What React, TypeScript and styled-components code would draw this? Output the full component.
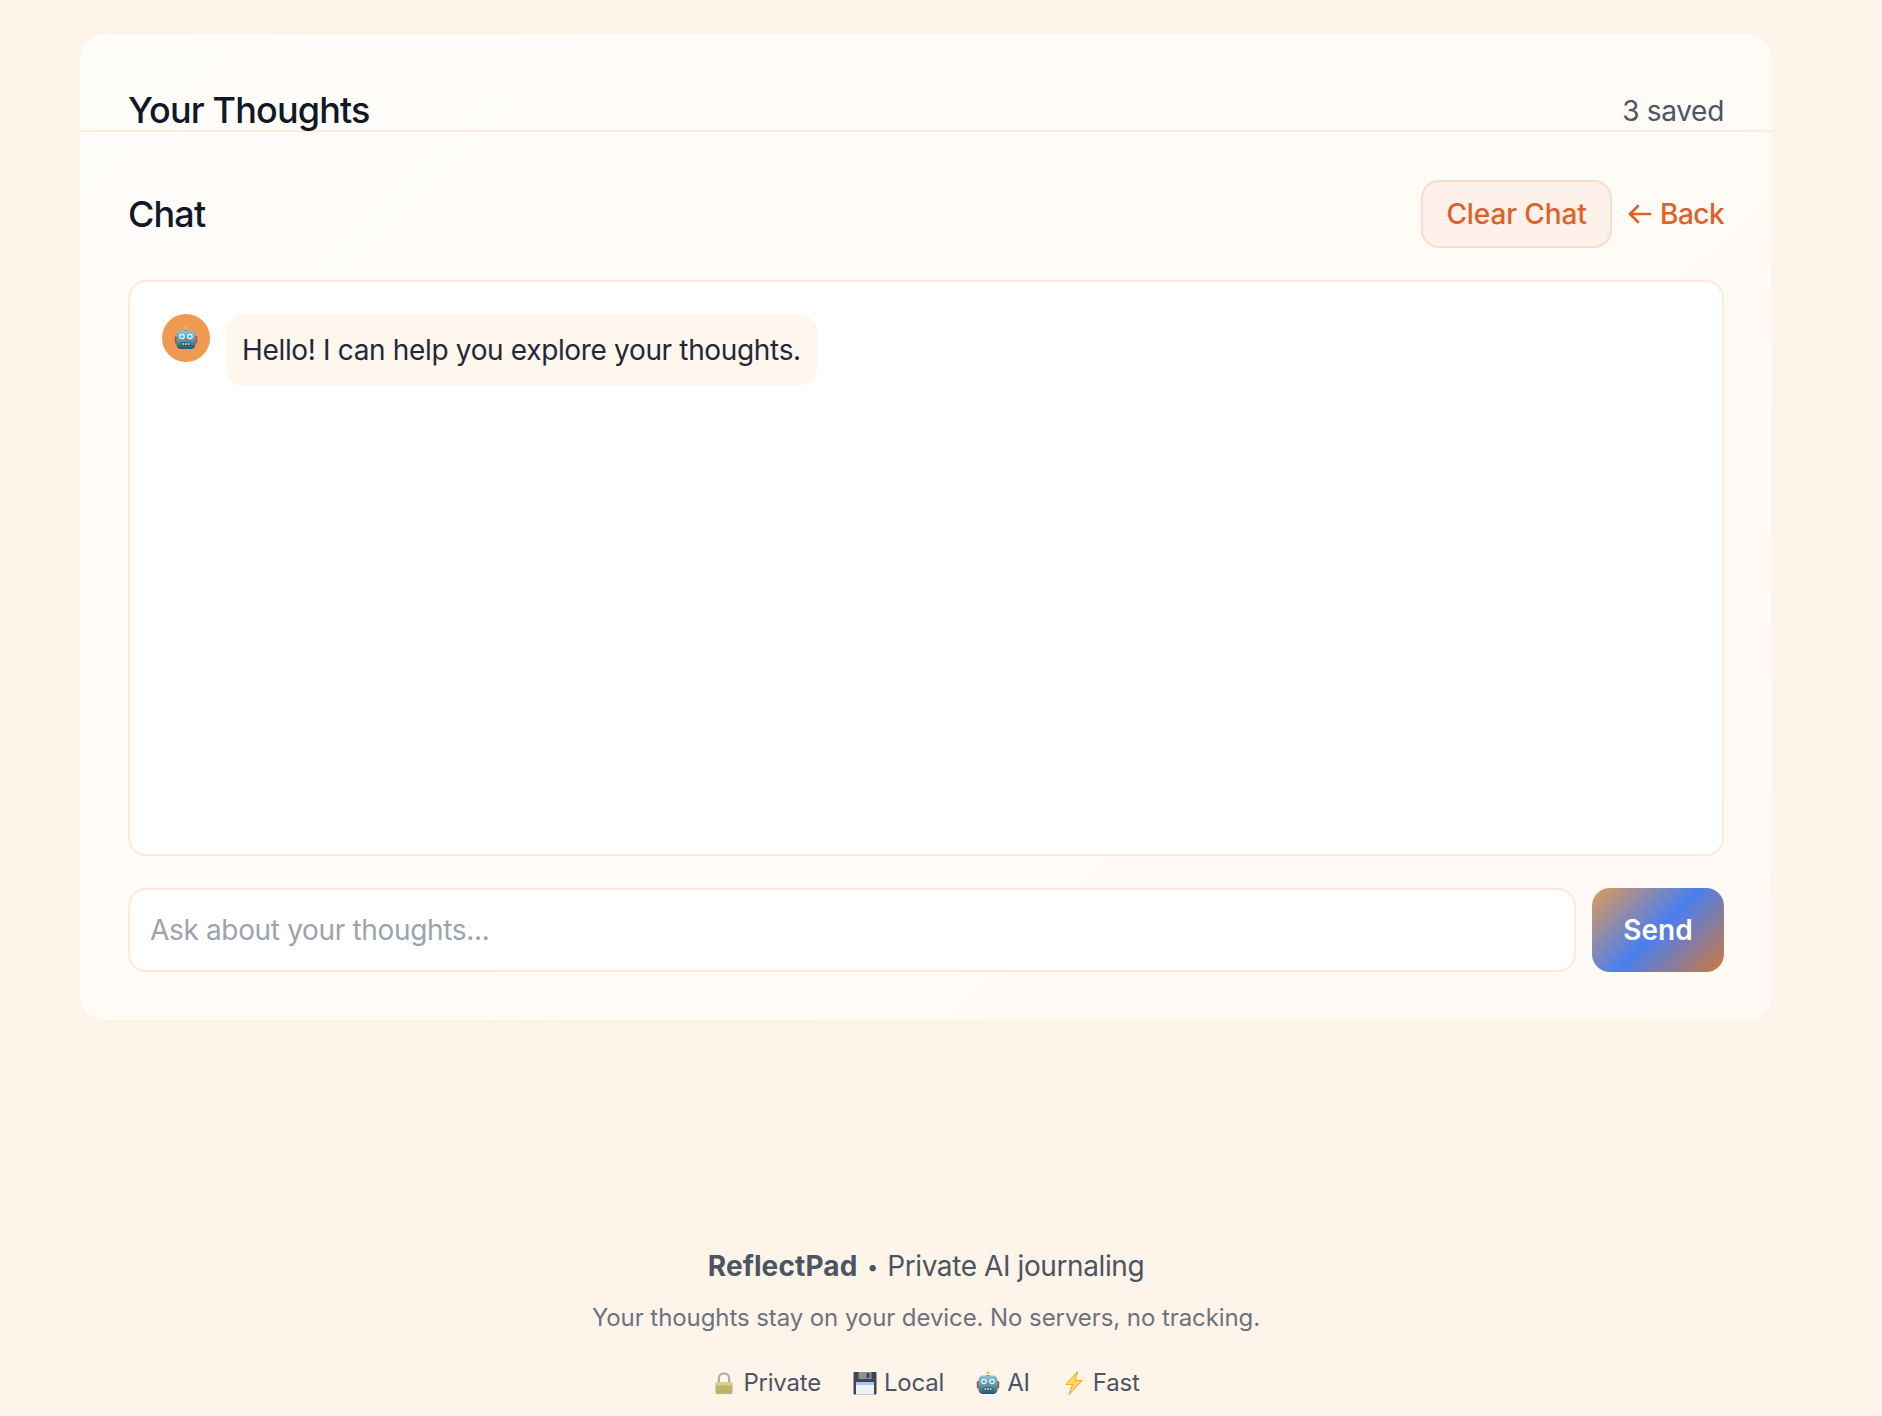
import styled, { createGlobalStyle } from 'styled-components';

const GlobalStyle = createGlobalStyle`
  html, body {
    margin: 0;
    padding: 0;
    background: #fff4ea;
  }
  body {
    font-family: Inter, "Noto Sans", sans-serif;
    color: #111827;
  }
`;

const Page = styled.div`
  width: 1852px;
  height: 1416px;
  overflow: hidden;
  padding: 34px 80px 0;
  box-sizing: border-box;
  display: flex;
  flex-direction: column;
`;

const Card = styled.main`
  background: linear-gradient(135deg, #fffdf9, #fff9f5);
  border-radius: 24px;
  height: 986px;
  box-sizing: border-box;
  display: flex;
  flex-direction: column;
  box-shadow: 0 0 0 1px #fff0e4;
`;

const Header = styled.header`
  height: 98px;
  padding: 0 48px;
  box-sizing: border-box;
  display: flex;
  justify-content: space-between;
  align-items: flex-end;
  border-bottom: 2px solid #ffeadb;
`;

const Title = styled.h1`
  margin: 0;
  font-size: 36px;
  line-height: 48px;
  font-weight: 500;
  letter-spacing: -0.85px;
  height: 44px;
  color: #111827;
`;

const SavedCount = styled.span`
  font-size: 28px;
  height: 44px;
  line-height: 50px;
  letter-spacing: -0.3px;
  color: #4b5563;
`;

const Body = styled.section`
  flex: 1;
  padding: 48px;
  display: flex;
  flex-direction: column;
  min-height: 0;
`;

const ChatBar = styled.div`
  display: flex;
  justify-content: space-between;
  align-items: center;
  height: 68px;
  margin-bottom: 32px;
`;

const ChatTitle = styled.h2`
  margin: 0;
  font-size: 36px;
  font-weight: 500;
  letter-spacing: -0.85px;
  color: #111827;
`;

const Actions = styled.div`
  display: flex;
  align-items: center;
  gap: 16px;
`;

const ClearButton = styled.button`
  height: 68px;
  width: 191px;
  padding: 0;
  border: 2px solid #fbdcc5;
  border-radius: 18px;
  background: #fdf1e9;
  color: #dc6229;
  font: 500 28px Inter, sans-serif;
  letter-spacing: -0.1px;
`;

const BackLink = styled.a`
  display: flex;
  align-items: center;
  gap: 8px;
  color: #dc6229;
  font-size: 28px;
  font-weight: 500;
  letter-spacing: -0.55px;
`;

const Messages = styled.div`
  flex: 1;
  background: #fff;
  border: 2px solid #ffe9dc;
  border-radius: 18px;
  padding: 32px;
`;

const Message = styled.div`
  display: flex;
  align-items: flex-start;
  gap: 16px;
`;

const Avatar = styled.div`
  width: 48px;
  height: 48px;
  border-radius: 50%;
  background: #ef9a50;
  display: flex;
  align-items: center;
  justify-content: center;
`;

const Bubble = styled.div`
  background: #fff6ed;
  border-radius: 18px;
  padding: 16px;
  font-size: 28px;
  line-height: 40px;
  letter-spacing: -0.34px;
  color: #1f2937;
`;

const InputRow = styled.form`
  display: flex;
  gap: 16px;
  margin-top: 32px;
  height: 84px;
`;

const TextInput = styled.input`
  flex: 1;
  border: 2px solid #ffe9dc;
  border-radius: 18px;
  background: #fff;
  padding: 0 20px;
  font: 400 28px Inter, sans-serif;
  letter-spacing: -0.34px;
  outline: none;

  &::placeholder {
    color: #9ca3af;
  }
`;

const SendButton = styled.button`
  width: 132px;
  border: 0;
  border-radius: 18px;
  color: #fff;
  font: 600 28px Inter, sans-serif;
  background: linear-gradient(135deg, #e09a58 0%, #4a7fef 50%, #d2773a 100%);
`;

const Footer = styled.footer`
  margin-top: 226px;
  text-align: center;
`;

const Tagline = styled.p`
  margin: 0;
  font-size: 28px;
  line-height: 40px;
  letter-spacing: -0.4px;
  color: #4b5563;
`;

const Brand = styled.strong`
  font-weight: 700;
  letter-spacing: 0.1px;
`;

const Dot = styled.span`
  font-size: 20px;
  margin: 0 2px;
  vertical-align: 2px;
`;

const Note = styled.p`
  margin: 13px 0 0;
  font-size: 24px;
  line-height: 36px;
  letter-spacing: -0.08px;
  color: #6b7280;
`;

const Badges = styled.div`
  display: flex;
  justify-content: center;
  gap: 29px;
  margin-top: 29px;
  padding-right: 3px;
  font-size: 24px;
  line-height: 36px;
  letter-spacing: -0.2px;
  color: #4b5563;
`;

const Badge = styled.span`
  display: flex;
  align-items: center;
  gap: 4px;
`;

const IconBox = styled.span`
  width: 30px;
  display: flex;
  justify-content: center;
`;

const RobotIcon = ({ size = 24 }: { size?: number }): JSX.Element => (
  <svg width={size} height={size} viewBox="0 0 24 24">
    <defs>
      <linearGradient id="robot-head" x1="0" y1="0" x2="0" y2="1">
        <stop offset="0" stopColor="#8fc4d2" />
        <stop offset="0.55" stopColor="#5a97aa" />
        <stop offset="1" stopColor="#23586e" />
      </linearGradient>
    </defs>
    <circle cx="12" cy="1.8" r="1.5" fill="#f4b942" />
    <path d="M8.5 5.5q3.5-3.2 7 0z" fill="#6d55a0" />
    <rect x="0.8" y="10" width="3" height="7.5" rx="1.2" fill="#b5503c" />
    <rect x="20.2" y="10" width="3" height="7.5" rx="1.2" fill="#b5503c" />
    <rect x="2.5" y="4.5" width="19" height="18.5" rx="4.5" fill="url(#robot-head)" />
    <circle cx="8" cy="10.5" r="2.8" fill="#e3f7fd" />
    <circle cx="16" cy="10.5" r="2.8" fill="#e3f7fd" />
    <circle cx="8" cy="10.5" r="1.5" fill="#36b2e0" />
    <circle cx="16" cy="10.5" r="1.5" fill="#36b2e0" />
    <path d="M12 11.5l1.7 3h-3.4z" fill="#e0574f" />
    <rect x="7.5" y="16.5" width="9" height="3" rx="1" fill="#1f4a5c" />
    <rect x="8.3" y="17.2" width="1.9" height="1.6" fill="#d5dfe2" />
    <rect x="11" y="17.2" width="1.9" height="1.6" fill="#d5dfe2" />
    <rect x="13.7" y="17.2" width="1.9" height="1.6" fill="#d5dfe2" />
  </svg>
);

const LockIcon = (): JSX.Element => (
  <svg width="20" height="24" viewBox="0 0 20 24">
    <path d="M4.8 12V7.5a5.2 5.2 0 0 1 10.4 0V12" fill="none" stroke="#a9b0b2" strokeWidth="2.2" />
    <rect x="1.5" y="11.5" width="17" height="11.5" rx="1.5" fill="#bfb26a" />
    <rect x="1.5" y="11.5" width="17" height="3" fill="#d9cd8a" />
  </svg>
);

const DiskIcon = (): JSX.Element => (
  <svg width="24" height="24" viewBox="0 0 24 24">
    <rect x="0.5" y="1" width="23" height="22.5" rx="1" fill="#3f4650" />
    <rect x="5.5" y="1" width="13" height="7" fill="#8b929b" />
    <rect x="13.5" y="2" width="3" height="5" fill="#3f4650" />
    <rect x="3" y="11" width="18" height="12.5" fill="#eef1f6" />
    <rect x="3" y="11" width="18" height="3" fill="#a9c4f2" />
  </svg>
);

const BoltIcon = (): JSX.Element => (
  <svg width="20" height="24" viewBox="0 0 20 24">
    <path d="M13.5 0.5 2 13.5h6.5L5 23.5 18 9.5h-7z" fill="#fdd66b" stroke="#f5a623" strokeWidth="1" strokeLinejoin="round" />
  </svg>
);

const ArrowIcon = (): JSX.Element => (
  <svg width="24" height="24" viewBox="0 0 24 24" fill="none" stroke="currentColor" strokeWidth="2.6" strokeLinecap="round" strokeLinejoin="round">
    <path d="M22 12H2" />
    <path d="M10 4l-8 8 8 8" />
  </svg>
);

const App = (): JSX.Element => (
  <Page>
    <GlobalStyle />
    <Card>
      <Header>
        <Title>Your Thoughts</Title>
        <SavedCount>3 saved</SavedCount>
      </Header>
      <Body>
        <ChatBar>
          <ChatTitle>Chat</ChatTitle>
          <Actions>
            <ClearButton type="button">Clear Chat</ClearButton>
            <BackLink><ArrowIcon />Back</BackLink>
          </Actions>
        </ChatBar>
        <Messages>
          <Message>
            <Avatar><RobotIcon /></Avatar>
            <Bubble>Hello! I can help you explore your thoughts.</Bubble>
          </Message>
        </Messages>
        <InputRow>
          <TextInput placeholder="Ask about your thoughts..." />
          <SendButton type="button">Send</SendButton>
        </InputRow>
      </Body>
    </Card>
    <Footer>
      <Tagline><Brand>ReflectPad</Brand> <Dot>•</Dot> Private AI journaling</Tagline>
      <Note>Your thoughts stay on your device. No servers, no tracking.</Note>
      <Badges>
        <Badge><IconBox><LockIcon /></IconBox>Private</Badge>
        <Badge><IconBox><DiskIcon /></IconBox>Local</Badge>
        <Badge><IconBox><RobotIcon /></IconBox>AI</Badge>
        <Badge><IconBox><BoltIcon /></IconBox>Fast</Badge>
      </Badges>
    </Footer>
  </Page>
);

export default App;
